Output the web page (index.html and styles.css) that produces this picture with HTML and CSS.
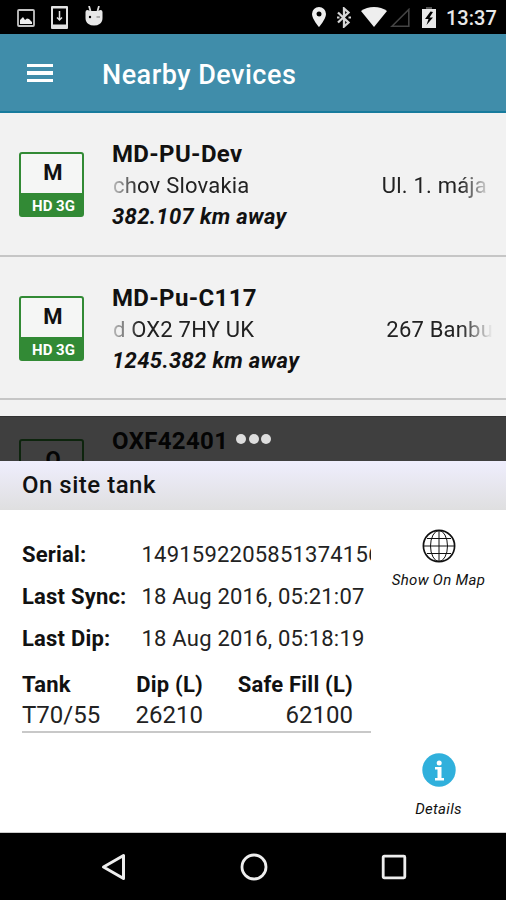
FILE: index.html
```html
<!DOCTYPE html>
<html lang="en">
<head>
<meta charset="utf-8">
<title>Nearby Devices</title>
<link rel="stylesheet" href="styles.css">
</head>
<body>
<div class="screen">
  <div class="status">
    <svg class="s-image" width="18" height="18" viewBox="0 0 18 18"><rect x="1" y="1" width="16" height="16" rx="1" fill="none" stroke="#c4c4c4" stroke-width="1.800"/><path d="M3 15v-4l3-3 2 3 2-1.500 2 .5 3 3v2z" fill="#eee"/></svg>
    <svg class="s-download" width="17" height="23" viewBox="0 0 17 23"><path fill="#e2e2e2" fill-rule="evenodd" d="M1 0h15q1 0 1 1v21q0 1-1 1H1q-1 0-1-1V1q0-1 1-1zm1 2.500v16h13v-16z"/><path d="M8.500 5v9M6 11.500l2.500 2.500 2.500-2.500" fill="none" stroke="#e2e2e2" stroke-width="1.500"/></svg>
    <svg class="s-cat" width="18" height="20" viewBox="0 0 18 20"><path d="M4 0l1.500 5M14 0l-1.500 5" stroke="#ddd" stroke-width="1.800"/><path fill="#e8e8e8" d="M.5 6q0-2 2-2l3 1h7l3-1q2 0 2 2v6q0 4-3 6-2 1.500-5.500 1.500T3.500 18q-3-2-3-6z"/><circle cx="5" cy="11" r="1.200"/><path d="M11.500 11h3.500" stroke="#777"/></svg>
    <span class="fill"></span>
    <svg class="s-pin" width="14" height="20" viewBox="0 0 14 20"><path fill="#eee" fill-rule="evenodd" d="M7 0a7 7 0 0 0-7 7c0 5 7 13 7 13s7-8 7-13a7 7 0 0 0-7-7zm0 4.500a2.500 2.500 0 1 1 0 5 2.500 2.500 0 0 1 0-5z"/></svg>
    <svg class="s-bt" width="14" height="21" viewBox="0 0 14 21"><path d="M1 5.500l10.500 10-4.500 4V1.500l4.500 4-10.500 10" fill="none" stroke="#d6d6d6" stroke-width="2.300"/><path d="M0 10.500h2.500M11.500 10.500H14" stroke="#d6d6d6" stroke-width="2"/></svg>
    <svg class="s-wifi" width="26" height="20" viewBox="0 0 26 20"><path fill="#eee" d="M0 4q5.500-4 13-4t13 4L13 20z"/></svg>
    <svg class="s-cell" width="20" height="19" viewBox="0 0 20 19"><path d="M2 18.200L18.800 1.500v16.700z" fill="none" stroke="#444" stroke-width="1.600"/></svg>
    <svg class="s-battery" width="14" height="21" viewBox="0 0 14 21"><path fill="#e8e8e8" d="M0 2h14v19H0z"/><path d="M4 0h6v2H4z" fill="#555"/><path d="M8.500 4.500L3 12h3.500L4.500 18 11 10.500H7.500L11 5z"/></svg>
    <span class="time">13:37</span>
  </div>

  <header class="appbar">
    <span class="burger"><i></i><i></i><i></i></span>
    <h1>Nearby Devices</h1>
  </header>

  <main class="list">
    <article class="device">
      <div class="tag"><b>M</b><span>HD 3G</span></div>
      <div class="info">
        <h2>MD-PU-Dev</h2>
        <p class="place"><span>chov Slovakia</span><span>Ul. 1. mája</span></p>
        <p class="away">382.107 km away</p>
      </div>
    </article>
    <article class="device">
      <div class="tag"><b>M</b><span>HD 3G</span></div>
      <div class="info">
        <h2>MD-Pu-C117</h2>
        <p class="place wide"><span>d OX2 7HY UK</span><span>267 Banbu</span></p>
        <p class="away">1245.382 km away</p>
      </div>
    </article>
    <article class="device">
      <div class="tag"><b>O</b></div>
      <div class="info">
        <h2>OXF42401</h2>
      </div>
    </article>
  </main>

  <section class="sheet">
    <div class="handle"><i></i><i></i><i></i></div>
    <h2 class="sheet-title">On site tank</h2>
    <div class="sheet-body">
      <div class="data">
        <dl>
          <dt>Serial:</dt><dd>1491592205851374156</dd>
          <dt>Last Sync:</dt><dd>18 Aug 2016, 05:21:07</dd>
          <dt>Last Dip:</dt><dd>18 Aug 2016, 05:18:19</dd>
        </dl>
        <table>
          <tr><th>Tank</th><th>Dip (L)</th><th>Safe Fill (L)</th></tr>
          <tr><td>T70/55</td><td>26210</td><td>62100</td></tr>
        </table>
      </div>
      <div class="actions">
        <div class="action">
          <svg width="34" height="34" viewBox="0 0 34 34" fill="none" stroke="#111"><circle cx="17" cy="17" r="15.600" stroke-width="1.700"/><g stroke-width="1"><ellipse cx="17" cy="17" rx="8.500" ry="15.500"/><path d="M17 1.500v31M1.500 17h31M5 9.500h24M5 24.500h24"/></g></svg>
          <span>Show On Map</span>
        </div>
        <div class="action info-action">
          <svg width="34" height="34" viewBox="0 0 34 34"><circle cx="17" cy="17" r="16.700" fill="#30b0dc"/><circle cx="17.200" cy="10" r="2.500" fill="#fff"/><path fill="#fff" d="M13 14h6.500v11H22v2.500h-9V25h2.500v-8.500H13z"/></svg>
          <span>Details</span>
        </div>
      </div>
    </div>
  </section>

  <nav class="nav">
    <svg width="26" height="28" viewBox="0 0 26 28"><path d="M2.500 14L22.500 2.500v23z" fill="none" stroke="#eee" stroke-width="3" stroke-linejoin="round"/></svg>
    <svg width="28" height="28" viewBox="0 0 28 28"><circle cx="14" cy="14" r="12" fill="none" stroke="#eee" stroke-width="2.800"/></svg>
    <svg width="26" height="26" viewBox="0 0 26 26"><rect x="2.200" y="2.200" width="21.600" height="21.600" rx="1" fill="none" stroke="#eee" stroke-width="2.800"/></svg>
  </nav>
</div>
</body>
</html>
```
FILE: styles.css
```css
* { box-sizing: border-box; }
body, h1, h2, p, dl, dd { margin: 0; }
body { font-family: Roboto, "Liberation Sans", sans-serif; color: #111; }
.screen { position: relative; width: 506px; height: 900px; overflow: hidden; background: #000; display: flex; flex-direction: column; white-space: nowrap; }

.status { height: 34px; display: flex; align-items: flex-start; padding-left: 17px; padding-right: 9px; flex: none; }
.status svg { flex: none; }
.s-image { margin-top: 9px; }
.s-download { margin: 6px 0 0 16px; }
.s-cat { margin: 6px 0 0 17px; }
.fill { flex: 1; }
.s-pin { margin: 7px 11px 0 0; }
.s-bt { margin: 7px 10px 0 0; }
.s-wifi { margin: 7px 3px 0 0; }
.s-cell { margin: 8px 12px 0 0; }
.s-battery { margin: 7px 10px 0 0; }
.time { width: 51px; color: #e8e8e8; font-size: 20px; font-weight: 500; line-height: 36px; }

.appbar { height: 79px; flex: none; display: flex; align-items: center; padding-left: 27px; background: #408daa; border-bottom: 2px solid #177b9d; }
.burger { width: 26px; display: flex; flex-direction: column; gap: 4px; margin-right: 49px; margin-top: 1px; }
.burger i { height: 3.500px; background: #fff; }
.appbar h1 { color: #fff; font-size: 27px; font-weight: 500; line-height: 34px; margin-top: 5px; letter-spacing: .5px; }

.list { height: 720px; flex: none; overflow: hidden; background: #f2f2f2; }
.device { height: 143.500px; display: flex; border-bottom: 2px solid #c6c6c6; padding: 25px 14px 0 19px; }
.tag { width: 65px; height: 65px; margin-top: 14px; border: 2px solid #328a35; border-radius: 3px; background: #f5f6f5; display: flex; flex-direction: column; justify-content: space-between; }
.tag b { text-align: center; font-size: 22px; line-height: 37px; font-weight: 700; padding-left: 3px; }
.tag span { height: 22px; background: #328a35; color: #fff; text-align: center; font-size: 15px; line-height: 26px; font-weight: 700; padding-left: 4px; }
.info { flex: 1; margin-left: 27px; }
.info h2 { font-size: 24px; line-height: 32px; font-weight: 700; letter-spacing: .35px; padding-left: 1px; }
.place { display: flex; justify-content: space-between; font-size: 22px; line-height: 32px; color: #222; padding: 0 5px 0 2px; letter-spacing: .2px;
  -webkit-mask-image: linear-gradient(90deg, rgba(0,0,0,.2), #000 28px, #000 calc(100% - 32px), transparent); mask-image: linear-gradient(90deg, rgba(0,0,0,.2), #000 28px, #000 calc(100% - 32px), transparent); }
.place.wide { padding-right: 0; margin-right: -1px; }
.away { font-size: 22px; line-height: 29px; font-weight: 700; font-style: italic; letter-spacing: .35px; padding-left: 1px; }

.sheet { position: absolute; left: 0; right: 0; top: 416px; height: 417px; display: flex; flex-direction: column; }
.handle { height: 45px; background: rgba(0,0,0,.74); border-top: 1px solid rgba(0,0,0,.2); display: flex; justify-content: center; align-items: center; gap: 2.500px; padding-left: 1px; }
.handle i { width: 10px; height: 10px; border-radius: 50%; background: #ddd; }
.sheet-title { height: 49px; background: linear-gradient(#efeefd, #dfdfe0); font-size: 24px; font-weight: 500; line-height: 48px; padding-left: 22px; letter-spacing: .5px; }
.sheet-body { flex: 1; background: #fff; display: flex; border-bottom: 1px solid #ccc; }
.data { width: 371px; padding: 24px 0 0 22px; }
dl { display: grid; grid-template-columns: 119.500px 229.500px; font-size: 22px; line-height: 42px; }
dt { font-weight: 700; letter-spacing: .2px; }
dd { overflow: hidden; color: #222; letter-spacing: .22px; }
table { width: 349px; margin-top: 9px; border-collapse: collapse; table-layout: fixed; border-bottom: 2px solid #c8c8c8; font-size: 22px; line-height: 31px; }
th, td { padding: 0; text-align: right; }
th { font-weight: 700; letter-spacing: .2px; }
td { color: #222; font-size: 24px; }
th:first-child, td:first-child { width: 95px; text-align: left; }
th:nth-child(2) { width: 86px; }
th:last-child, td:last-child { padding-right: 18px; }
.actions { flex: 1; display: flex; flex-direction: column; justify-content: space-between; padding: 19px 0 11px 0; }
.action { display: flex; flex-direction: column; align-items: center; font-size: 15px; font-style: italic; line-height: 24px; gap: 5px; letter-spacing: .3px; }
.info-action { gap: 10px; }
.action svg { display: block; }
.nav { height: 67px; flex: none; display: flex; align-items: center; padding-left: 101px; }
.nav svg + svg { margin-left: 113px; }
```
